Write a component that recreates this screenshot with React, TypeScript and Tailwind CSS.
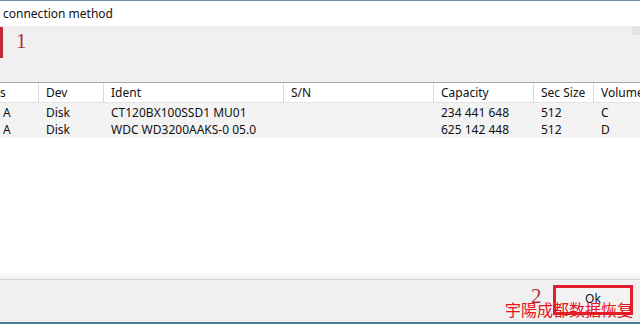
import React from "react";

const cols = [
  { w: "w-[39px]", pl: "pl-0" },
  { w: "w-[65px]", pl: "pl-[7px]" },
  { w: "w-[180px]", pl: "pl-[7px]" },
  { w: "w-[150px]", pl: "pl-[7px]" },
  { w: "w-[100px]", pl: "pl-[7px]" },
  { w: "w-[60px]", pl: "pl-[7px]" },
  { w: "flex-1", pl: "pl-[7px]" },
];

const header = ["s", "Dev", "Ident", "S/N", "Capacity", "Sec Size", "Volume"];
const rows = [
  ["A", "Disk", "CT120BX100SSD1 MU01", "", "234 441 648", "512", "C"],
  ["A", "Disk", "WDC WD3200AAKS-0 05.0", "", "625 142 448", "512", "D"],
];

export default function App() {
  return (
    <div
      className="relative flex h-[324px] w-[640px] flex-col overflow-hidden bg-white text-[12px] text-[#111]"
      style={{ fontFamily: '"Noto Sans", "Open Sans", sans-serif' }}
    >
      <div className="h-px bg-[#6c93ad]" />
      <div className="flex h-[25px] items-center pl-[3px] bg-white">connection method</div>
      <div className="flex h-[56px] bg-[#f0f0f0]">
        <div className="mt-px h-[31px] w-[3px] bg-[#c42a35]" />
        <div
          className="ml-[13px] mt-[1px] text-[21px] leading-[28px] text-[#a83038]"
          style={{ fontFamily: '"Liberation Serif", serif' }}
        >
          1
        </div>
        <div className="flex-1" />
        <div className="h-[9px] w-[8px] bg-[#e4e4e4]" />
      </div>
      <div className="flex h-[21px] border-t border-b border-t-[#a8a8a8] border-b-[#e3e3e3] bg-white">
        {header.map((h, i) => (
          <div
            key={i}
            className={`${cols[i].w} ${cols[i].pl} flex items-center overflow-hidden whitespace-nowrap ${i < header.length - 1 ? "border-r border-[#dadada]" : ""}`}
          >
            {h}
          </div>
        ))}
      </div>
      <div className="bg-[#f3f3f3] pt-px">
        {rows.map((r, ri) => (
          <div key={ri} className="flex h-[17px]">
            {r.map((c, i) => (
              <div
                key={i}
                className={`${cols[i].w} ${i === 0 ? "pl-[3px]" : cols[i].pl} flex items-center overflow-hidden whitespace-nowrap`}
              >
                {c}
              </div>
            ))}
          </div>
        ))}
      </div>
      <div className="flex-1 bg-white" />
      <div className="h-[8px] flex flex-col">
        <div className="h-[3px] bg-[#fafafa]" />
        <div className="h-[3px] bg-[#f4f4f4]" />
        <div className="h-px bg-[#d6d6d6]" />
        <div className="h-px bg-[#f4f4f4]" />
      </div>
      <div className="flex h-[41px] justify-end bg-[#f0f0f0] pr-[7px] pt-[4px]">
        <div className="flex h-[30px] w-[80px] items-start justify-center border-[3px] border-[#e2202b] bg-[#f2f2f2] pt-[3px] leading-[16px]">
          Ok
        </div>
      </div>
      <div className="h-[2px] bg-[#4a7f9a]" />
      <div
        className="absolute left-[531px] top-[284px] text-[21px] leading-[24px] text-[#b03040]"
        style={{ fontFamily: '"Liberation Serif", serif' }}
      >
        2
      </div>
      <div
        className="absolute left-[505px] top-[299px] whitespace-nowrap text-[16px] leading-[20px] text-[#e8141c]"
        style={{ fontFamily: '"Noto Sans CJK SC", sans-serif' }}
      >
        宇陽成都数据恢复
      </div>
    </div>
  );
}
